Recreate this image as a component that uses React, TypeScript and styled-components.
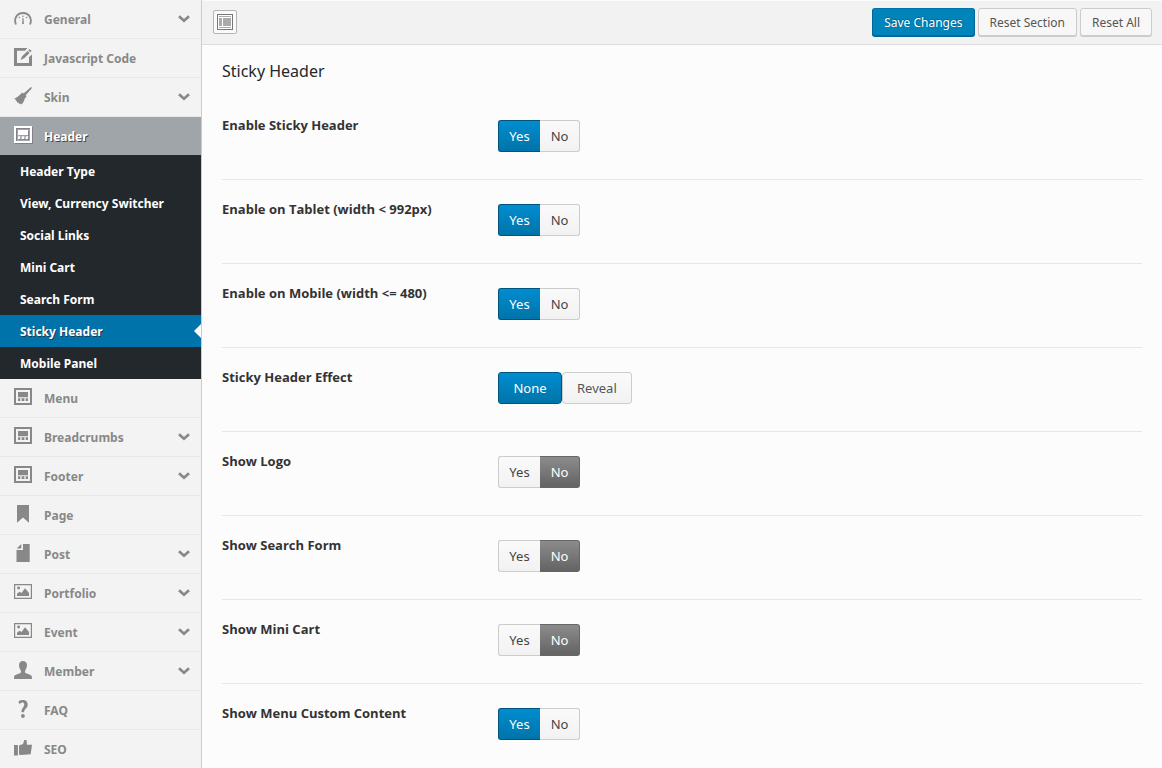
import React, { useState } from "react";
import styled, { createGlobalStyle, css } from "styled-components";

const GlobalStyle = createGlobalStyle`
  *, *::before, *::after { box-sizing: border-box; }
  body {
    margin: 0;
    background: #fcfcfc;
    color: #333;
    font-family: "Noto Sans", "Open Sans", sans-serif;
    font-size: 13px;
  }
`;

const Page = styled.div`
  display: flex;
  align-items: stretch;
  min-height: 100vh;
`;

const Sidebar = styled.nav`
  flex: 0 0 202px;
  background: #f3f3f3;
  border-right: 1px solid #ccc;
`;

const MenuList = styled.ul`
  margin: 0;
  padding: 0;
  list-style: none;
`;

const MenuItem = styled.li`
  &:last-child > a { border-bottom: 0; height: 38px; }
`;

const MenuLink = styled.a<{ $active?: boolean }>`
  display: flex;
  align-items: center;
  gap: 12px;
  height: 39px;
  padding: 0 11px 0 14px;
  border-bottom: 1px solid #e7e7e7;
  color: #888;
  font-size: 12px;
  font-weight: 700;
  text-decoration: none;
  ${(p) =>
    p.$active &&
    css`
      height: 38px;
      border-bottom: 0;
      background: #a0a5aa;
      color: #fff;
      text-shadow: 1px 1px #444;
      svg { filter: drop-shadow(1px 1px 0 #85808a); }
    `}
`;

const MenuText = styled.span`
  flex: 1;
`;

const IconSvg = styled.svg`
  flex: none;
  display: block;
  width: 18px;
  height: 18px;
  margin-bottom: 2px;
`;

const ChevronSvg = styled.svg`
  flex: none;
  display: block;
  width: 12px;
  height: 8px;
`;

const SubList = styled(MenuList)`
  background: #23282d;
`;

const SubLink = styled.a<{ $active?: boolean }>`
  display: flex;
  align-items: center;
  position: relative;
  height: 32px;
  padding: 0 20px;
  color: #fff;
  font-size: 12px;
  font-weight: 700;
  text-decoration: none;
  ${(p) =>
    p.$active &&
    css`
      background: #0073aa;
      text-shadow: 1px 1px #1c3a4c;
      &::after {
        content: "";
        position: absolute;
        right: 0;
        top: 9px;
        border: 7px solid transparent;
        border-left: 0;
        border-right-color: #fcfcfc;
      }
    `}
`;

const Main = styled.main`
  flex: 1;
  min-width: 0;
`;

const Toolbar = styled.div`
  display: flex;
  align-items: center;
  justify-content: space-between;
  height: 45px;
  padding: 0 10px 2px 11px;
  background: #f2f2f2;
  border-top: 1px solid #fcfcfc;
  border-bottom: 1px solid #dedede;
`;

const Actions = styled.div`
  display: flex;
  gap: 3px;
`;

const ExpandButton = styled.button`
  display: grid;
  place-items: center;
  width: 24px;
  height: 24px;
  padding: 0;
  border: 1px solid #b5b5b5;
  border-radius: 2px;
  background: #fafafa;
`;

const ActionButton = styled.button<{ $primary?: boolean }>`
  height: 28px;
  padding: 1px 11px 0;
  border: 1px solid #ccc;
  border-radius: 3px;
  background: #f7f7f7;
  box-shadow: 0 1px 0 #ccc;
  color: #555;
  font-family: inherit;
  font-size: 12px;
  ${(p) =>
    p.$primary &&
    css`
      border-color: #0073aa #006799 #006799;
      background: #0085ba;
      box-shadow: 0 1px 0 #006799;
      color: #fff;
      text-shadow: 0 -1px 1px #006799, 1px 0 1px #006799;
    `}
`;

const Content = styled.div`
  padding: 16px 20px 0;
`;

const Title = styled.h1`
  margin: 0 0 11px;
  color: #23282d;
  font-size: 16px;
  font-weight: 400;
  line-height: 20px;
`;

const Field = styled.fieldset`
  display: grid;
  grid-template-columns: 30% 1fr;
  align-items: start;
  height: 84px;
  margin: 0;
  padding: 19px 0 0;
  border: 0;
  border-bottom: 1px solid #e7e7e7;
  &:first-of-type { padding-top: 23px; height: 88px; }
  &:last-child { border-bottom: 0; }
`;

const FieldLabel = styled.span`
  color: #333;
  font-family: "Open Sans", sans-serif;
  font-size: 13px;
  font-weight: 700;
  line-height: 20px;
`;

const Options = styled.div`
  display: flex;
  padding-top: 5px;
`;

const Option = styled.label<{ $tone: "off" | "blue" | "gray"; $wide?: boolean }>`
  display: flex;
  align-items: center;
  justify-content: center;
  min-width: ${(p) => (p.$wide ? 64 : 40)}px;
  height: 32px;
  padding: 0 ${(p) => (p.$wide ? 14 : 10)}px;
  border: 1px solid #ccc;
  background: linear-gradient(#fafafa, #f2f2f2);
  color: #444;
  font-size: 13px;
  cursor: pointer;
  border-radius: ${(p) => (p.$wide ? "4px" : "0")};
  &:first-child {
    border-top-left-radius: 3px;
    border-bottom-left-radius: 3px;
  }
  &:last-child {
    border-top-right-radius: 3px;
    border-bottom-right-radius: 3px;
  }
  ${(p) => !p.$wide && css`
    &:first-child { min-width: 42px; border-right: 0; }
    &:last-child { border-left: 0; }
  `}
  ${(p) => p.$wide && p.$tone === "off" && css`color: #555;`}
  ${(p) =>
    p.$tone === "blue" &&
    css`
      border-color: #00557f;
      background: linear-gradient(#008dd0, #0074a9);
      color: #fff;
    `}
  ${(p) =>
    p.$tone === "gray" &&
    css`
      border-color: #666;
      background: linear-gradient(#8c8c8c, #636363);
      color: #fff;
    `}
`;

const HiddenRadio = styled.input`
  position: absolute;
  width: 1px;
  height: 1px;
  margin: 0;
  opacity: 0;
`;

const website = (
  <path fillRule="evenodd" d="M0 0H18V17H0ZM2 2V15H16V2ZM4 4H14V9.300H4ZM4 10.300H6.300V13H4ZM7.600 10.300H10.400V13H7.600ZM11.700 10.300H14V13H11.700Z" />
);
const picture = (
  <path fillRule="evenodd" d="M0 1H18V16H0ZM1.200 2.200V14.800H16.800V2.200ZM4.600 3.500A1.400 1.400 0 1 1 4.600 6.400A1.400 1.400 0 1 1 4.600 3.500ZM3 13V10.800L5.500 8.800L7.500 10L11 5.200L13 7.500L15 10V13Z" />
);

const icons: Record<string, React.ReactNode> = {
  general: (
    <>
      <path d="M2 15.500C-.6 9.500 3 4 9 4C15 4 18.600 9.500 16 15.500" fill="none" stroke="currentColor" strokeWidth="1.800" />
      <path d="M8.500 9H9.500L9.900 15H8.100Z" />
      <circle cx="9" cy="7.200" r=".8" />
      <circle cx="5.400" cy="8.500" r=".8" />
      <circle cx="12.600" cy="8.500" r=".8" />
    </>
  ),
  edit: (
    <>
      <path d="M0 0H13.500L11 2.700H3V15H15V9L18 6.500V18H0Z" />
      <path d="M15.500 1L17.600 3L16.300 4.200L14.200 2.200ZM13.500 2.900L15.600 5L10.200 10.300L6.500 12L8.100 8.200Z" />
    </>
  ),
  skin: (
    <path d="M17 0L18 1.100L11.700 8.200L12.600 9.600L10.900 11.200C10 14 9 16 7.600 17.600L6.400 16.500L6 17.200L4 15.500L3.700 15.900L2.400 13.800L1.900 14L1.500 12.200L0 11.500C2.500 11.400 4.200 9 6.500 7.200L8.300 5.600L9.600 6.600Z" />
  ),
  website,
  picture,
  page: <path d="M3 0H15V17.800L9 12.400L3 17.800Z" />,
  post: <path d="M9 0H15.700V18H2.500V6H9ZM7.300 0V4.400H2.700Z" />,
  member: (
    <path d="M9 0C11.500 0 13.100 1.600 13 4.300C12.900 6.500 12 8.200 11.100 9.500V11.500C12 13 17.900 13.200 17.900 16V18H.1V16C.1 13.200 6 13 6.900 11.500V9.500C6 8.200 5.100 6.500 5 4.300C4.900 1.600 6.500 0 9 0Z" />
  ),
  faq: (
    <>
      <path d="M4.400 1.500C8 -1 13.700 -.2 13.700 4.400C13.700 8.600 10.100 8.500 10.100 12.200H7.500C7.300 7.700 10.200 7.600 10.200 4.500C10.200 1.800 7.300 1.900 5.500 4.300Z" />
      <circle cx="8.900" cy="16" r="1.900" />
    </>
  ),
  seo: (
    <path d="M0 6H3.900V16.500H0ZM5 6.500L9 5.100L10.300 1H12.500L13 5.700H18L16.700 15.300L6.500 16L5 15.500Z" />
  ),
};

const Icon = ({ name }: { name: string }) => (
  <IconSvg viewBox="0 0 18 18" fill="currentColor" aria-hidden="true">
    {icons[name]}
  </IconSvg>
);

const Chevron = () => (
  <ChevronSvg viewBox="0 0 12 8" fill="none" stroke="currentColor" strokeWidth="2.600" aria-hidden="true">
    <path d="M1 1.200L6 5.800L11 1.200" />
  </ChevronSvg>
);

type Entry = { label: string; icon: string; expandable?: boolean; children?: string[] };

const menu: Entry[] = [
  { label: "General", icon: "general", expandable: true },
  { label: "Javascript Code", icon: "edit" },
  { label: "Skin", icon: "skin", expandable: true },
  {
    label: "Header",
    icon: "website",
    children: [
      "Header Type",
      "View, Currency Switcher",
      "Social Links",
      "Mini Cart",
      "Search Form",
      "Sticky Header",
      "Mobile Panel",
    ],
  },
  { label: "Menu", icon: "website" },
  { label: "Breadcrumbs", icon: "website", expandable: true },
  { label: "Footer", icon: "website", expandable: true },
  { label: "Page", icon: "page" },
  { label: "Post", icon: "post", expandable: true },
  { label: "Portfolio", icon: "picture", expandable: true },
  { label: "Event", icon: "picture", expandable: true },
  { label: "Member", icon: "member", expandable: true },
  { label: "FAQ", icon: "faq" },
  { label: "SEO", icon: "seo" },
];

type Setting = { label: string; options: string[]; initial: number; wide?: boolean };

const yesNo = ["Yes", "No"];
const settings: Setting[] = [
  { label: "Enable Sticky Header", options: yesNo, initial: 0 },
  { label: "Enable on Tablet (width < 992px)", options: yesNo, initial: 0 },
  { label: "Enable on Mobile (width <= 480)", options: yesNo, initial: 0 },
  { label: "Sticky Header Effect", options: ["None", "Reveal"], initial: 0, wide: true },
  { label: "Show Logo", options: yesNo, initial: 1 },
  { label: "Show Search Form", options: yesNo, initial: 1 },
  { label: "Show Mini Cart", options: yesNo, initial: 1 },
  { label: "Show Menu Custom Content", options: yesNo, initial: 0 },
];

const SettingRow = ({ setting, id }: { setting: Setting; id: string }) => {
  const [selected, setSelected] = useState(setting.initial);
  return (
    <Field aria-labelledby={id}>
      <FieldLabel id={id}>{setting.label}</FieldLabel>
      <Options>
        {setting.options.map((option, i) => (
          <Option
            key={option}
            $wide={setting.wide}
            $tone={selected !== i ? "off" : option === "No" ? "gray" : "blue"}
          >
            <HiddenRadio type="radio" name={id} checked={selected === i} onChange={() => setSelected(i)} />
            {option}
          </Option>
        ))}
      </Options>
    </Field>
  );
};

export default function App() {
  return (
    <>
      <GlobalStyle />
      <Page>
        <Sidebar aria-label="Sections">
          <MenuList>
            {menu.map((entry) => (
              <MenuItem key={entry.label}>
                <MenuLink href="#" $active={!!entry.children}>
                  <Icon name={entry.icon} />
                  <MenuText>{entry.label}</MenuText>
                  {entry.expandable && <Chevron />}
                </MenuLink>
                {entry.children && (
                  <SubList>
                    {entry.children.map((child) => (
                      <li key={child}>
                        <SubLink href="#" $active={child === "Sticky Header"}>
                          {child}
                        </SubLink>
                      </li>
                    ))}
                  </SubList>
                )}
              </MenuItem>
            ))}
          </MenuList>
        </Sidebar>
        <Main>
          <Toolbar>
            <ExpandButton type="button" aria-label="Expand">
              <svg width="16" height="16" viewBox="0 0 16 16" aria-hidden="true">
                <rect x=".5" y=".5" width="15" height="15" fill="#fff" stroke="#777" />
                <path d="M2 2H14V3H2ZM2 4H5V12H2ZM6 4H14V12H6ZM2 13H14V14H2Z" fill="#aaa" />
              </svg>
            </ExpandButton>
            <Actions>
              <ActionButton type="button" $primary>Save Changes</ActionButton>
              <ActionButton type="button">Reset Section</ActionButton>
              <ActionButton type="button">Reset All</ActionButton>
            </Actions>
          </Toolbar>
          <Content>
            <Title>Sticky Header</Title>
            {settings.map((setting, i) => (
              <SettingRow key={setting.label} setting={setting} id={`setting-${i}`} />
            ))}
          </Content>
        </Main>
      </Page>
    </>
  );
}
